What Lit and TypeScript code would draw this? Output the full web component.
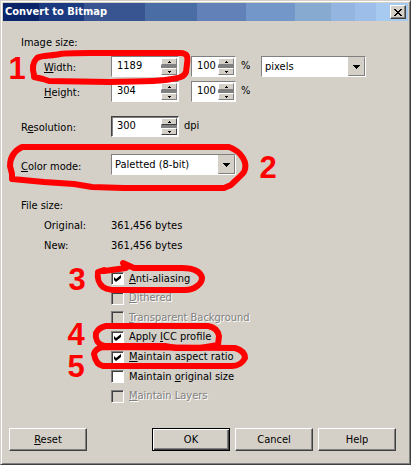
import { LitElement, html, css, svg, nothing } from "lit";
import { customElement, property } from "lit/decorators.js";

const font = css`"DejaVu Sans Condensed", "Noto Sans", sans-serif`;

@customElement("spin-field")
class SpinField extends LitElement {
  @property() value = "";
  @property() label = "";
  @property({ type: Boolean }) strong = false;
  static styles = css`
    :host { display: block; }
    .field { display: flex; box-sizing: border-box; height: 21px; background: #fff; border: 1px solid; border-color: #808080 #fff #fff #808080; padding: 1px; }
    .strong { border-color: #404040 #fff #fff #404040; box-shadow: inset 1px 1px #808080; }
    input { flex: 1; min-width: 0; height: 15px; border: 0; padding: 0 0 0 4px; margin: 0; background: transparent; outline: 0; font: 11px/15px ${font}; color: #000; }
    .spin { display: flex; flex-direction: column; justify-content: space-between; width: 16px; background: #808080; }
    button { display: flex; align-items: center; justify-content: center; height: 7px; padding: 0; background: #d4d0c8; border: 1px solid; border-color: #fff #808080 #808080 #fff; }
    .strong button { border-color: #fff #404040 #404040 #fff; }
    svg { display: block; width: 3px; height: 2px; }
  `;
  step(d: number) { this.value = String(Number(this.value) + d); }
  render() {
    return html`<div class="field ${this.strong ? "strong" : ""}">
      <input type="text" aria-label=${this.label} .value=${this.value} />
      <div class="spin">
        <button aria-label="Increase ${this.label}" @click=${() => this.step(1)}><svg viewBox="0 0 3 2"><path d="M1 0h1v1h1v1H0V1h1z" /></svg></button>
        <button aria-label="Decrease ${this.label}" @click=${() => this.step(-1)}><svg viewBox="0 0 3 2"><path d="M0 0h3v1H2v1H1V1H0z" /></svg></button>
      </div>
    </div>`;
  }
}

interface Option { pre?: string; key: string; rest: string; on?: boolean; off?: boolean; }

const options: Option[] = [
  { key: "A", rest: "nti-aliasing", on: true },
  { key: "D", rest: "ithered", off: true },
  { key: "T", rest: "ransparent Background", off: true },
  { pre: "Apply ", key: "I", rest: "CC profile", on: true },
  { key: "M", rest: "aintain aspect ratio", on: true },
  { pre: "Maintain ", key: "o", rest: "riginal size" },
  { key: "M", rest: "aintain Layers", off: true },
];

const rings = [
  "M34 75C32 68 33 62 37 58C41 55 52 56 60 54C66 53 78 53 90 53L180 53C188 53 188 57 187 64L186 72C184 78 177 78 165 80C150 82 130 81 110 82L49 81L43 79L34 77Z",
  "M22 147L229 147C235 149 240 153 243 158C246 163 246 168 244 172C240 177 235 181 231 185L224 188L124 188L92 187L74 184L44 182L12 179L12 174L10 166C10 158 14 151 22 147Z",
  "M104 270L98 272C97 278 99 284 103 287C108 290 112 290 120 290L185 290C194 290 202 284 202 278C201 272 194 268 182 268L134 268L123 263L126 268L104 271",
  "M106 326L208 326C214 327 218 331 219 336L218 345L200 348L176 348L165 346L104 346C97 344 95 338 96 333C98 329 101 327 106 326Z",
  "M103 347L235 348C242 350 245 354 245 358C243 362 239 366 232 366L103 366C97 365 95 360 94 354C95 350 98 348 103 347Z",
];

@customElement("app-root")
class AppRoot extends LitElement {
  static styles = css`
    :host { display: block; font: 11px/20px ${font}; color: #000; }
    .dialog { position: relative; box-sizing: border-box; padding: 2px; background: #d4d0c8; border: 1px solid; border-color: #d4d0c8 #404040 #404040 #d4d0c8; box-shadow: inset 1px 1px #fff, inset -1px -1px #808080; }
    .title { display: flex; align-items: center; justify-content: space-between; height: 18px; padding: 0 2px;
      background: linear-gradient(90deg, #0a246a 9%, #1c3a80 9% 20%, #385592 20% 35%, #4b6da5 35% 48%, #6281b9 48% 60%, #7297c8 60% 72%, #86aad0 72% 81%, #94b5df 81% 87%, #9dbee8 87% 92%, #a6caf0 92%); }
    h1 { margin: 0; color: #fff; font: bold 11px/18px ${font}; }
    .close { display: flex; align-items: center; justify-content: center; width: 16px; height: 14px; padding: 0; }
    button { font: inherit; color: #000; background: #d4d0c8; border: 1px solid; border-color: #fff #404040 #404040 #fff; box-shadow: inset -1px -1px #808080; }
    .close svg { width: 8px; height: 7px; }
    .content { padding: 11px 12px 0 18px; }
    h2 { margin: 0; height: 20px; font: inherit; line-height: 22px; }
    .row { display: flex; height: 21px; }
    .row > label { width: 90px; line-height: 24px; box-sizing: border-box; }
    .row > .sub { padding-left: 23px; }
    .size { width: 68px; }
    .percent { width: 45px; margin-left: 12px; }
    .unit { margin-left: 5px; width: 20px; }
    .sizes { display: grid; gap: 4px; margin-top: 4px; }
    .resolution { margin-top: 14px; }
    .mode { margin-top: 17px; }
    .mode > label { line-height: 26px; }
    .combo { position: relative; width: 105px; height: 21px; }
    .wide { width: 125px; }
    select { appearance: none; width: 100%; height: 100%; margin: 0; padding: 0 20px 0 3px; background: #fff; border: 1px solid; border-color: #808080 #fff #fff #808080; border-radius: 0; font: inherit; color: #000; outline: 0; }
    .arrow { position: absolute; right: 1px; top: 1px; bottom: 1px; width: 17px; box-sizing: border-box; display: flex; align-items: center; justify-content: center; background: #d4d0c8; border: 1px solid; border-color: #d4d0c8 #808080 #808080 #d4d0c8; pointer-events: none; }
    .arrow svg { width: 7px; height: 4px; }
    .files { margin-top: 20px; }
    dl { display: grid; grid-template-columns: 67px 1fr; grid-auto-rows: 20px; margin: 0; padding-left: 23px; line-height: 22px; }
    dd { margin: 0; }
    .options { display: grid; height: 137px; margin: 14px 0 22px 90px; }
    .option { display: flex; align-items: center; gap: 5px; line-height: 14px; }
    .option input { appearance: none; width: 13px; height: 13px; margin: 0; background: #fff; border: 1px solid; border-color: #808080 #fff #fff #808080; box-shadow: inset 1px 1px #404040; }
    .tick { position: relative; display: flex; }
    .tick svg { position: absolute; inset: 3px; width: 7px; height: 7px; pointer-events: none; }
    .option input:disabled { background: #d4d0c8; }
    .off { color: #808080; text-shadow: 1px 1px #fff; }
    .buttons { display: flex; gap: 5px; padding: 0 12px 11px 6px; }
    .buttons button { width: 78px; height: 23px; padding: 0; line-height: 18px; }
    .buttons .reset { margin-right: auto; }
    .buttons .ok { border-color: #000; box-shadow: inset 1px 1px #fff, inset -1px -1px #404040, inset -2px -2px #808080; }
    .marks { position: absolute; left: -1px; top: -1px; width: 411px; height: 465px; pointer-events: none; }
    .marks path { fill: none; stroke: #f00; stroke-width: 6px; stroke-linejoin: round; stroke-linecap: round; }
    .marks text { fill: #f00; font: bold 31px "Liberation Sans", sans-serif; text-anchor: middle; }
  `;
  arrow() {
    return html`<span class="arrow"><svg viewBox="0 0 7 4"><path d="M0 0h7v1H6v1H5v1H4v1H3V3H2V2H1V1H0z" /></svg></span>`;
  }
  sizeRow(key: string, rest: string, value: string) {
    return html`<div class="row">
      <label class="sub" for=${key}><u>${key}</u>${rest}:</label>
      <spin-field id=${key} class="size" label=${key + rest} value=${value}></spin-field>
      <spin-field class="percent" label="${key + rest} percent" value="100"></spin-field>
      <span class="unit">%</span>
      ${key === "W" ? html`<div class="combo"><select aria-label="Units"><option>pixels</option></select>${this.arrow()}</div>` : nothing}
    </div>`;
  }
  render() {
    return html`<main class="dialog">
      <header class="title"><h1>Convert to Bitmap</h1>
        <button class="close" aria-label="Close"><svg viewBox="0 0 8 7"><path d="M0 0h2v1h1v1h2V1h1V0h2v1H7v1H6v1H5v1h1v1h1v1h1v1H6V6H5V5H3v1H2v1H0V6h1V5h1V4h1V3H2V2H1V1H0z" /></svg></button>
      </header>
      <div class="content">
        <h2>Image size:</h2>
        <div class="sizes">${this.sizeRow("W", "idth", "1189")}${this.sizeRow("H", "eight", "304")}</div>
        <div class="row resolution"><label for="res">R<u>e</u>solution:</label><spin-field id="res" class="size" strong label="Resolution" value="300"></spin-field><span class="unit">dpi</span></div>
        <div class="row mode"><label for="mode"><u>C</u>olor mode:</label><div class="combo wide"><select id="mode"><option>Paletted (8-bit)</option></select>${this.arrow()}</div></div>
        <h2 class="files">File size:</h2>
        <dl><dt>Original:</dt><dd>361,456 bytes</dd><dt>New:</dt><dd>361,456 bytes</dd></dl>
        <div class="options">${options.map((o) => html`<label class="option ${o.off ? "off" : ""}">
          <span class="tick"><input type="checkbox" ?checked=${o.on} ?disabled=${o.off} />${o.on ? html`<svg viewBox="0 0 7 7"><path d="M0 2l2 2 5-4v3L2 7 0 5z" /></svg>` : nothing}</span>
          <span>${o.pre}<u>${o.key}</u>${o.rest}</span></label>`)}</div>
      </div>
      <footer class="buttons"><button class="reset"><u>R</u>eset</button><button class="ok">OK</button><button>Cancel</button><button>Help</button></footer>
      <svg class="marks" viewBox="0 0 411 465">
        ${rings.map((d) => svg`<path d=${d} />`)}
        ${[[17, 79], [268, 178], [77, 290], [76, 345], [76, 377]].map(([x, y], i) => svg`<text x=${x} y=${y}>${i + 1}</text>`)}
      </svg>
    </main>`;
  }
}
